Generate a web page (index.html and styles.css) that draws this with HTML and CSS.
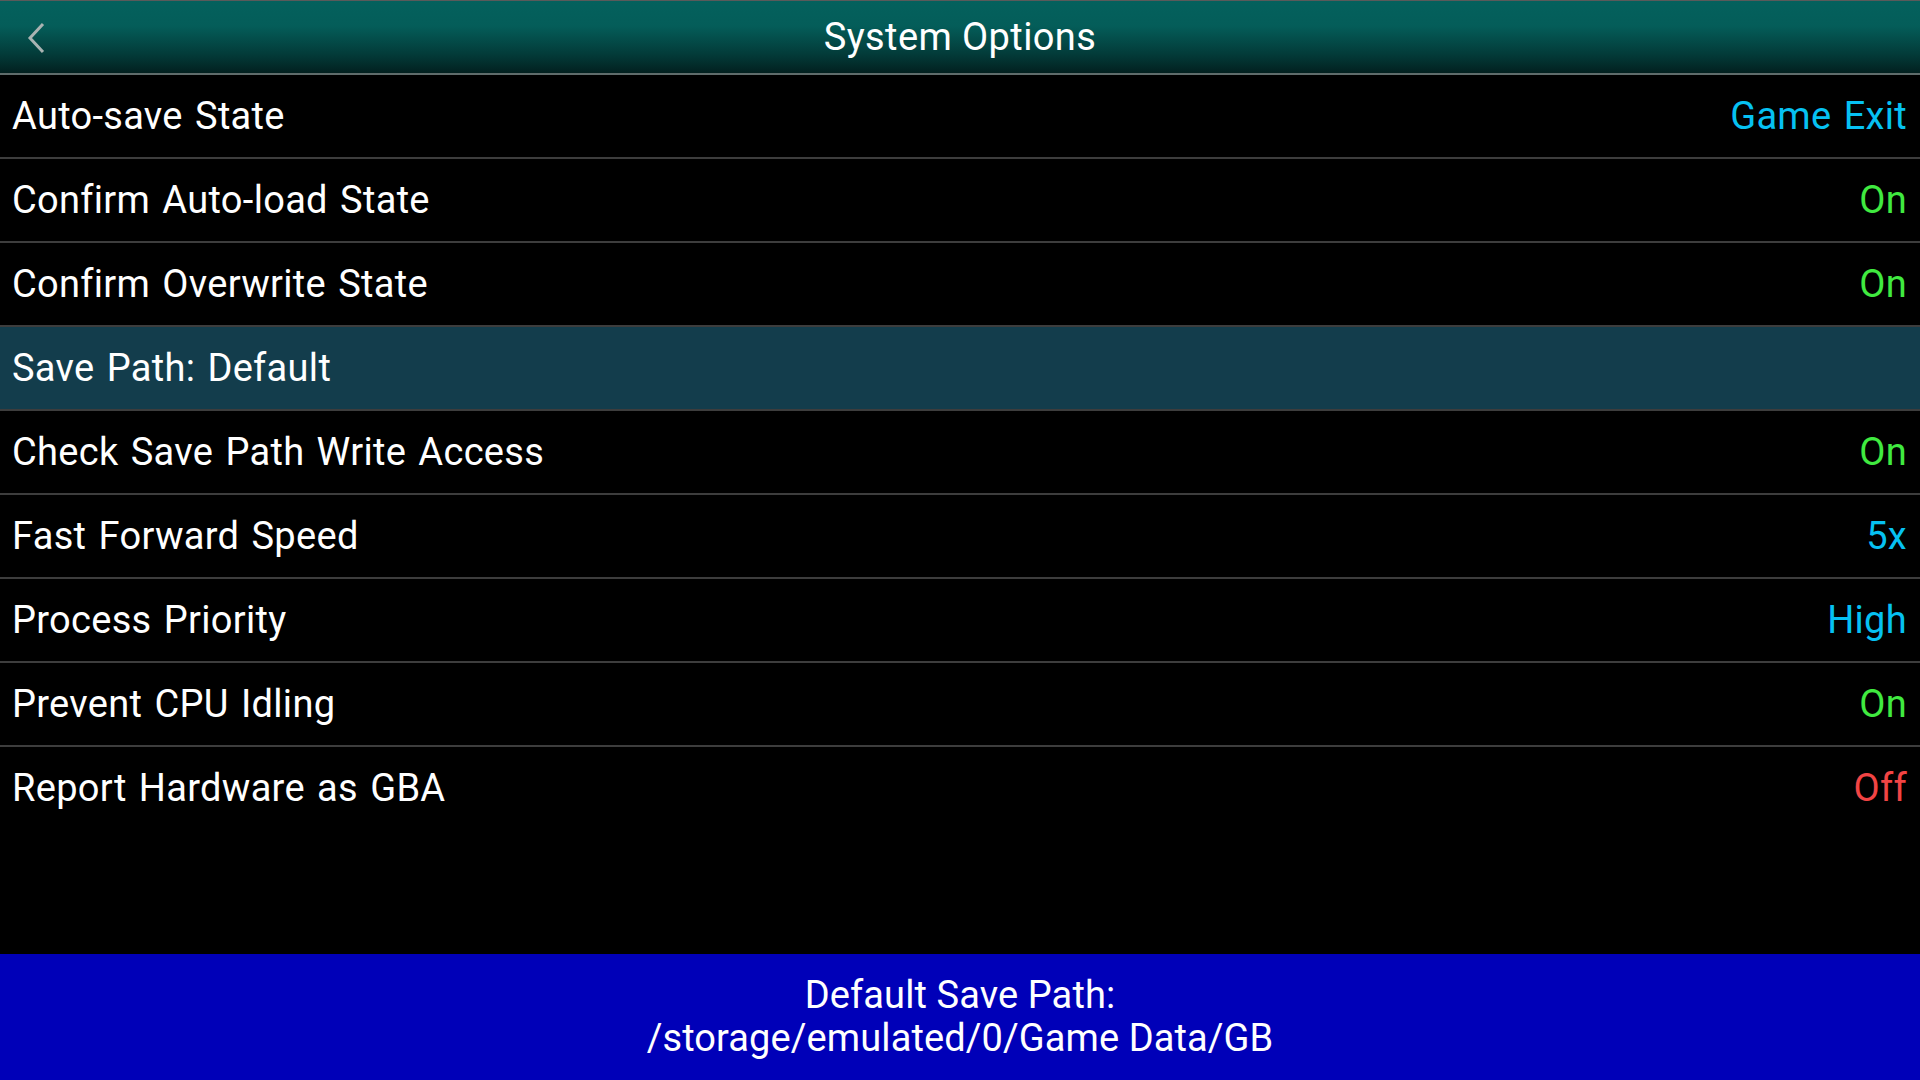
FILE: index.html
```html
<!DOCTYPE html>
<html lang="en">
  <head>
    <meta charset="UTF-8" />
    <meta name="viewport" content="width=device-width, initial-scale=1.0" />
    <title>System Options</title>
    <link rel="stylesheet" href="styles.css">
  </head>
  <body>
    <div class="screen">
      <!-- Barra superior -->
      <header class="topbar">
        <button class="back" aria-label="Back">
          <svg width="20" height="32" viewBox="0 0 20 32">
            <polyline points="16,2 3,16 16,30" fill="none" stroke="#a9b3b2" stroke-width="3" />
          </svg>
        </button>
        <h1 class="title">System Options</h1>
      </header>

      <!-- Lista de opciones -->
      <ul class="options">
        <li class="option"><span>Auto-save State</span><span class="val blue">Game Exit</span></li>
        <li class="option"><span>Confirm Auto-load State</span><span class="val green">On</span></li>
        <li class="option"><span>Confirm Overwrite State</span><span class="val green">On</span></li>
        <li class="option selected"><span>Save Path: Default</span></li>
        <li class="option"><span>Check Save Path Write Access</span><span class="val green">On</span></li>
        <li class="option"><span>Fast Forward Speed</span><span class="val blue">5x</span></li>
        <li class="option"><span>Process Priority</span><span class="val blue">High</span></li>
        <li class="option"><span>Prevent CPU Idling</span><span class="val green">On</span></li>
        <li class="option"><span>Report Hardware as GBA</span><span class="val red">Off</span></li>
      </ul>

      <!-- Info inferior -->
      <footer class="info">
        <p>Default Save Path:</p>
        <p>/storage/emulated/0/Game Data/GB</p>
      </footer>
    </div>
  </body>
</html>
```

FILE: styles.css
```css
body {
  margin: 0;
  padding: 0;
  background-color: #000;
  color: #fff;
  font-family: Roboto, "Noto Sans", sans-serif;
}

.screen {
  width: 1920px;
  height: 1080px;
  display: flex;
  flex-direction: column;
  overflow: hidden;
}

.topbar {
  position: relative;
  height: 72px;
  flex-shrink: 0;
  border-top: 1px solid #5a5a5a;
  border-bottom: 2px solid #5f6c6b;
  background: linear-gradient(to bottom, #04615d 0%, #045d59 35%, #033a38 75%, #02201f 100%);
  display: flex;
  align-items: center;
  justify-content: center;
}

.back {
  position: absolute;
  left: 27px;
  top: 21px;
  padding: 0;
  border: none;
  background: none;
  display: flex;
}

.title {
  margin: 0;
  font-size: 38px;
  font-weight: 400;
  letter-spacing: 0.4px;
}

.options {
  list-style: none;
  margin: 0;
  padding: 0;
}

.option {
  height: 82px;
  padding: 0 13px 0 12px;
  display: flex;
  align-items: center;
  justify-content: space-between;
  font-size: 38px;
  letter-spacing: 0.3px;
  word-spacing: 2.5px;
  border-bottom: 2px solid #3d3d3d;
}

.option:last-child {
  border-bottom: none;
}

.option.selected {
  background-color: #133d4c;
}

.val.blue {
  color: #06c1f2;
}

.val.green {
  color: #40ea40;
}

.val.red {
  color: #f24444;
}

.info {
  margin-top: auto;
  height: 126px;
  flex-shrink: 0;
  background-color: #0000b8;
  display: flex;
  flex-direction: column;
  justify-content: center;
  align-items: center;
  font-size: 38px;
  letter-spacing: 0.1px;
}

.info p {
  margin: 0;
  line-height: 43px;
}
```
